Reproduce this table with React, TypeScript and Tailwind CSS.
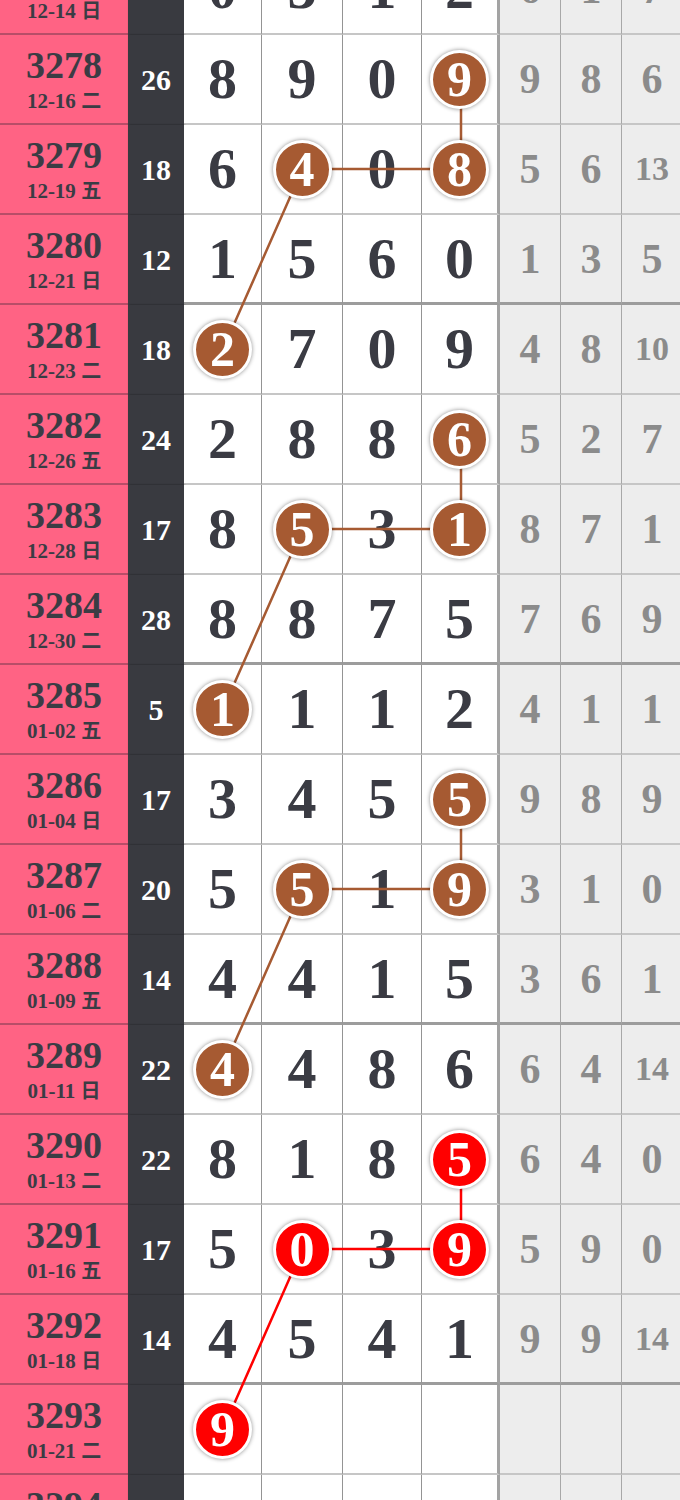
import React from 'react';

type Row = {
  no: string;
  date: string;
  wd: string;
  sum: string;
  d: (number | null)[];
  g: string[];
};

const rows: Row[] = [
  { no: '3277', date: '12-14', wd: '日', sum: '6', d: [0, 3, 1, 2], g: ['6', '1', '7'] },
  { no: '3278', date: '12-16', wd: '二', sum: '26', d: [8, 9, 0, 9], g: ['9', '8', '6'] },
  { no: '3279', date: '12-19', wd: '五', sum: '18', d: [6, 4, 0, 8], g: ['5', '6', '13'] },
  { no: '3280', date: '12-21', wd: '日', sum: '12', d: [1, 5, 6, 0], g: ['1', '3', '5'] },
  { no: '3281', date: '12-23', wd: '二', sum: '18', d: [2, 7, 0, 9], g: ['4', '8', '10'] },
  { no: '3282', date: '12-26', wd: '五', sum: '24', d: [2, 8, 8, 6], g: ['5', '2', '7'] },
  { no: '3283', date: '12-28', wd: '日', sum: '17', d: [8, 5, 3, 1], g: ['8', '7', '1'] },
  { no: '3284', date: '12-30', wd: '二', sum: '28', d: [8, 8, 7, 5], g: ['7', '6', '9'] },
  { no: '3285', date: '01-02', wd: '五', sum: '5', d: [1, 1, 1, 2], g: ['4', '1', '1'] },
  { no: '3286', date: '01-04', wd: '日', sum: '17', d: [3, 4, 5, 5], g: ['9', '8', '9'] },
  { no: '3287', date: '01-06', wd: '二', sum: '20', d: [5, 5, 1, 9], g: ['3', '1', '0'] },
  { no: '3288', date: '01-09', wd: '五', sum: '14', d: [4, 4, 1, 5], g: ['3', '6', '1'] },
  { no: '3289', date: '01-11', wd: '日', sum: '22', d: [4, 4, 8, 6], g: ['6', '4', '14'] },
  { no: '3290', date: '01-13', wd: '二', sum: '22', d: [8, 1, 8, 5], g: ['6', '4', '0'] },
  { no: '3291', date: '01-16', wd: '五', sum: '17', d: [5, 0, 3, 9], g: ['5', '9', '0'] },
  { no: '3292', date: '01-18', wd: '日', sum: '14', d: [4, 5, 4, 1], g: ['9', '9', '14'] },
  { no: '3293', date: '01-21', wd: '二', sum: '', d: [9, null, null, null], g: ['', '', ''] },
  { no: '3294', date: '01-23', wd: '五', sum: '', d: [null, null, null, null], g: ['', '', ''] },
];

// each trend: [rowIndex, col] points, joined in order
const trends: { color: string; fill: string; pts: [number, number][] }[] = [
  { color: '#a65a32', fill: 'bg-[#a65a32]', pts: [[1, 3], [2, 3], [2, 1], [4, 0]] },
  { color: '#a65a32', fill: 'bg-[#a65a32]', pts: [[5, 3], [6, 3], [6, 1], [8, 0]] },
  { color: '#a65a32', fill: 'bg-[#a65a32]', pts: [[9, 3], [10, 3], [10, 1], [12, 0]] },
  { color: '#ff0000', fill: 'bg-[#ff0000]', pts: [[13, 3], [14, 3], [14, 1], [16, 0]] },
];

const colX = [223, 302.5, 382.5, 461];
const rowY = (i: number) => i * 90 + 44;

const hitFill = (r: number, c: number) => {
  for (const t of trends) {
    if (t.pts.some(([pr, pc]) => pr === r && pc === c)) return t.fill;
  }
  return null;
};

const serif = "font-['Liberation_Serif',serif] font-bold";

export default function App() {
  return (
    <div className={`h-[1500px] w-full overflow-hidden bg-white ${serif}`}>
      <div className="relative -mt-[55px] w-[683px]">
        {rows.map((r, i) => {
          const thick = Number(r.no) % 4 === 0;
          const line = thick ? 'border-b-[3px] border-b-[#9c9c9c]' : 'border-b-2 border-b-[#c6c6c6]';
          return (
            <div
              key={r.no}
              className="grid h-[90px] grid-cols-[128px_56px_78px_81px_79px_78px_61px_61px_61px]"
            >
              <div className="flex flex-col items-center justify-center gap-[6px] border-b-2 border-b-[#b84d68] bg-[#ff6384] text-[#3b3c44]">
                <span className="text-[38px] leading-none">{r.no}</span>
                <span className="text-[21px] leading-none">
                  {r.date}{' '}
                  <span className="font-['Noto_Sans_CJK_SC',sans-serif] text-[20px]">{r.wd}</span>
                </span>
              </div>
              <div className="flex items-center justify-center bg-[#393a40] text-[30px] leading-none text-white shadow-[1px_0_2px_rgba(0,0,0,0.45)]">
                {r.sum}
              </div>
              {r.d.map((v, c) => {
                const fill = hitFill(i, c);
                return (
                  <div
                    key={c}
                    className={`flex items-center justify-center ${line} ${
                      c === 3 ? 'border-r-[3px] border-r-[#a3a3a3]' : 'border-r border-r-[#949494]'
                    } bg-white text-[58px] leading-none text-[#3a3b43]`}
                  >
                    {fill ? (
                      <div
                        className={`relative z-10 flex h-[59px] w-[59px] items-center justify-center rounded-full border-[3px] border-white ${fill} text-[50px] leading-none text-white shadow-[0_0_4px_rgba(0,0,0,0.45)]`}
                      >
                        {v}
                      </div>
                    ) : (
                      v
                    )}
                  </div>
                );
              })}
              {r.g.map((v, c) => (
                <div
                  key={c}
                  className={`flex items-center justify-center ${line} border-r border-r-[#a8a8a8] bg-[#ededed] ${
                    v.length > 1 ? 'text-[34px]' : 'text-[42px]'
                  } leading-none text-[#8b8b8b]`}
                >
                  {v}
                </div>
              ))}
            </div>
          );
        })}
        <svg
          className="pointer-events-none absolute left-0 top-0"
          width={683}
          height={rows.length * 90}
        >
          {trends.map((t, k) => (
            <polyline
              key={k}
              points={t.pts.map(([r, c]) => `${colX[c]},${rowY(r)}`).join(' ')}
              fill="none"
              stroke={t.color}
              strokeWidth={2.5}
            />
          ))}
        </svg>
      </div>
    </div>
  );
}
